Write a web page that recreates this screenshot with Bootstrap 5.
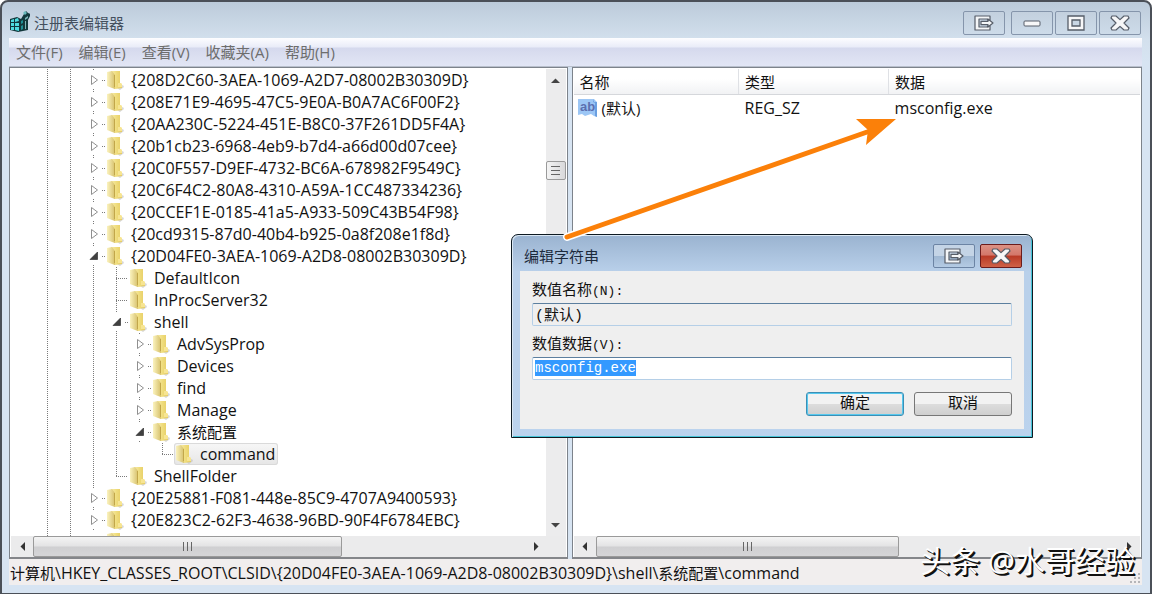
<!DOCTYPE html>
<html lang="zh-CN">
<head>
<meta charset="utf-8">
<meta name="viewport" content="width=device-width, initial-scale=1">
<title>注册表编辑器</title>
<link href="https://cdn.jsdelivr.net/npm/bootstrap@5.3.0/dist/css/bootstrap.min.css" rel="stylesheet">
<style>
html, body { height: 100%; }
body { font: 15px/22px "Open Sans", "Noto Sans CJK SC", sans-serif; color: #111; background: #fff; overflow: hidden; }
button { padding: 0; border: 0; background: none; color: inherit; }
svg { display: block; flex: none; }
.app-window { border: 2px solid #4b5058; border-bottom-width: 1px; border-radius: 8px 8px 0 0; background: linear-gradient(#bccbda 0, #d3e0ed 38px, #d7e4f2 60px); padding: 0 8px 8px 7px; }
.app-window > * { flex: none; }
.app-window > .panes { flex: 1 1 0; min-height: 0; }
.title-bar { height: 36px; padding-left: 1px; color: #44505e; }
.title-bar .caption { padding-top: 10px; }
.win-btns { display: flex; padding-top: 9px; line-height: 1; gap: 2px; }
.title-bar .win-btns { padding-right: 1px; }
.win-btn { width: 42px; height: 24px; border: 1px solid #8595ab; border-radius: 2px; display: flex; align-items: center; justify-content: center; background: linear-gradient(#c3d0de, #cddbe9); }
.menu-bar { height: 29px; padding: 0 0 2px 7px; background: linear-gradient(#fdfdff 0, #e9ecf8 9px, #d5d9ed 10px, #e2e6f5 28px, #b8bfcc 28px); }
.menu-bar button { color: #6d6d6d; margin-right: 16px; }
.pane { border: 1px solid #7d838b; border-bottom: 2px solid #84868a; background: #fff; min-width: 0; padding: 1px 1px 0; }
.tree-pane { flex: 0 0 49.3%; }
.value-pane { flex: 1 1 0; }
.tree { list-style: none; margin: 0; padding: 0 0 0 25px; overflow: hidden; font-size: 16px; }
.tree em, .status em { font-style: normal; font-size: 15px; }
.tree li { display: flex; height: 22px; white-space: nowrap; }
.tree i { width: 23px; flex: none; display: flex; justify-content: center; align-items: center; }
.tree .ln { background: repeating-linear-gradient(#7a7a7a 0 1px, transparent 1px 2px) 11px 0 / 1px 100% no-repeat; }
.tree .tee { background: repeating-linear-gradient(#7a7a7a 0 1px, transparent 1px 2px) 11px 0 / 1px 100% no-repeat, repeating-linear-gradient(90deg, #7a7a7a 0 1px, transparent 1px 2px) 11px 11px / 12px 1px no-repeat; }
.tree .elb { background: repeating-linear-gradient(#7a7a7a 0 1px, transparent 1px 2px) 11px 0 / 1px 12px no-repeat, repeating-linear-gradient(90deg, #7a7a7a 0 1px, transparent 1px 2px) 11px 11px / 12px 1px no-repeat; }
.tree .knob { background: linear-gradient(#7a7a7a, #7a7a7a) 11px 0 / 1px 1px no-repeat, linear-gradient(#7a7a7a, #7a7a7a) 11px 20px / 1px 1px no-repeat, repeating-linear-gradient(90deg, #7a7a7a 0 1px, transparent 1px 2px) 20px 11px / 3px 1px no-repeat; }
.tree span { display: flex; gap: 7px; padding: 0 3px 0 1px; line-height: 22px; }
.tree .picked { background: linear-gradient(#f7f7f7, #e6e6e6); box-shadow: inset 0 0 0 1px #dadada; border-radius: 3px; }
.bar-v { width: 20px; flex: none; background: #ececed; }
.bar-h { height: 21px; flex: none; background: #ebebec; }
.bar-h .arrow { width: 22px; }
.bar-v .arrow { height: 22px; }
.arrow, .grip { display: flex; align-items: center; justify-content: center; flex: none; }
.grip { border: 1px solid #9a9a9a; border-radius: 2px; background: linear-gradient(#f4f4f4, #e3e3e4 48%, #cfcfd1 52%, #d5d5d7); }
.bar-v .grip { height: 19px; background: linear-gradient(90deg, #f4f4f4, #d8d8da); }
.reg-list { width: 100%; table-layout: fixed; line-height: 24px; }
.reg-list th { font-weight: 400; height: 24px; padding: 1px 0 0 6px; background: linear-gradient(#fff 40%, #f1f2f4); border-right: 1px solid #dfe1e5; border-bottom: 1px solid #d5d7db; }
.reg-list th:last-child { border-right: 0; }
.reg-list td { padding: 0 0 0 6px; height: 26px; }
.reg-list .latin { font-size: 16px; }
.status { height: 26px; background: #f1eeee; white-space: nowrap; padding: 3px 0 0 1px; font-size: 16px; }
.edit-dialog { position: absolute; left: 511px; top: 234px; width: 522px; border: 1px solid #0e1a22; border-radius: 7px 7px 0 0; background: linear-gradient(#9ab3d0, #b9d0ea 37px, #b9d0ea 130px, #bbd3ee); box-shadow: inset 1px 1px #dbe8f4, inset -1px -1px #45c4d8; padding: 0 8px 8px; }
.edit-dialog .head { height: 36px; color: #1c2a3c; padding: 0 2px 0 4px; }
.edit-dialog .win-btns { gap: 5px; }
.edit-dialog .win-btn { background: linear-gradient(#c4d4e6 50%, #9fb7d2 50%, #b4cbe4); border-color: #6c84a4; }
.edit-dialog .win-btn.quit { background: linear-gradient(#dc9184 0, #d4776a 46%, #b93a26 50%, #cf6147); border-color: #6b1c1c; }
.edit-body { background: #efefef; padding: 10px 12px 13px; font-family: "Liberation Mono", "Noto Sans CJK SC", monospace; }
.edit-body label { font-size: 13px; display: block; }
.edit-body label b { font-size: 15px; font-weight: 400; }
.edit-body input { display: block; width: 100%; height: 23px; margin-bottom: 9px; padding: 0 2px 1px; border: 1px solid #b5cfe7; border-top-color: #5c7f9f; border-radius: 2px; outline: 0; font-size: 14px; line-height: 16px; color: #111; }
.edit-body input[readonly] { background: #efefef; font-size: 15px; }
.edit-body input::selection { background: #3399ff; color: #fff; }
.answers { display: flex; justify-content: flex-end; gap: 10px; padding-top: 3px; }
.push { width: 98px; height: 24px; border: 1px solid #777; border-radius: 3px; background: linear-gradient(#f2f2f2 48%, #dcdcdc 52%, #cfcfcf); padding-top: 1px; line-height: 20px; }
.push.main { border-color: #3c8fb5; box-shadow: inset 0 0 0 1px #56c8ee; }
.pointer { position: absolute; left: 560px; top: 110px; pointer-events: none; }
.watermark { position: absolute; right: 17px; bottom: 13px; font-size: 30px; line-height: 40px; color: #fff; text-shadow: 1px 1px #111, 2px 2px #111; white-space: nowrap; }
</style>
</head>
<body>
<svg width="0" height="0" class="position-absolute">
<defs>
<linearGradient id="gold" x2="1"><stop offset="0" stop-color="#f8edaa"/><stop offset=".5" stop-color="#efdc7c"/><stop offset="1" stop-color="#e6cc62"/></linearGradient>
<linearGradient id="pale" x2="1"><stop offset="0" stop-color="#fbf3bf"/><stop offset="1" stop-color="#d6c06a"/></linearGradient>
<symbol id="folder" viewBox="0 0 18 22"><path d="M11 19l6-3 1 2-4 3z" fill="#bdbdbd" opacity=".6"/><path d="M5 2h9v13l2 1v3l-7 1-3-2z" fill="url(#gold)"/><path d="M1 3l5-1 3 4v14l-3-1-5-2z" fill="url(#pale)"/><path d="M8.500 6v12" stroke="#c2a74a" fill="none"/><path d="M12 14h3l1 1v3h-4z" fill="#f7e593"/></symbol>
<symbol id="closed" viewBox="0 0 9 12"><path d="M2.500 1.500l6 4.500-6 4.500z" fill="#fff" stroke="#8f8f8f"/></symbol>
<symbol id="opened" viewBox="0 0 9 12"><path d="M8.500 2v7.500H1z" fill="#404040" stroke="#222" stroke-width=".6"/></symbol>
<symbol id="exit" viewBox="0 0 20 16"><path d="M1 1h15v4h-2.500V4H5v8h8.500v-1H16v4H1z" fill="#f4f6f8" stroke="#565d68" stroke-width="1.200" stroke-linejoin="round"/><path d="M7 6.300h7V4l5 4-5 4V9.700H7z" fill="#f4f6f8" stroke="#565d68" stroke-width="1.200" stroke-linejoin="round"/></symbol>
<symbol id="cross" viewBox="0 0 20 16"><path d="M2 1h4l4 3.600L14 1h4l1 2-5 5 5 5-1 2h-4l-4-3.600L6 15H2l-1-2 5-5-5-5z" fill="#f7f7f8" stroke="#565d68" stroke-width="1.200" stroke-linejoin="round"/></symbol>
</defs>
</svg>
<main class="app-window vh-100 d-flex flex-column">
<header class="title-bar d-flex">
<svg width="20" height="22" viewBox="0 0 20 22" class="mt-2"><path d="M0 9l7-2 4 2 3-5 2-3 2 2 3 1-2 4-1 2v10l-5 1-5 1-8-2z" fill="#12383c"/><path d="M1 10l3-1v3H1zM5 9l3-1 1 3-4 1zM1 13h3v3H1zm4 0h4v3H5zm-4 4h3v3H1zm4 0h4v4l-4-1z" fill="#4fdde0"/><path d="M11 11l2-1v3l-2 1zm0 5l2-1v4l-2 1z" fill="#1e8f96"/><path d="M13 3l2-2 2 2-2 2z" fill="#69b9bb"/><path d="M15 8l3-2v2l-3 2zM15 11h1v8h-1z" fill="#7db5b8"/></svg>
<div class="caption ms-1 flex-grow-1">注册表编辑器</div>
<div class="win-btns">
<button class="win-btn me-1" aria-label="切换窗口"><svg width="20" height="16"><use href="#exit"/></svg></button>
<button class="win-btn" aria-label="最小化"><svg width="18" height="8"><rect x="1" y="2" width="16" height="5" rx="1" fill="#f7f7f8" stroke="#565d68"/></svg></button>
<button class="win-btn" aria-label="最大化"><svg width="18" height="16"><path d="M1 1h16v14H1zM5 5v6h8V5z" fill="#f7f7f8" fill-rule="evenodd" stroke="#565d68" stroke-width="1.300"/></svg></button>
<button class="win-btn" aria-label="关闭"><svg width="20" height="16"><use href="#cross"/></svg></button>
</div>
</header>
<nav class="menu-bar d-flex">
<button>文件(F)</button><button>编辑(E)</button><button>查看(V)</button><button>收藏夹(A)</button><button>帮助(H)</button>
</nav>
<div class="panes d-flex gap-1">
<section class="pane tree-pane d-flex flex-column">
<div class="d-flex flex-fill overflow-hidden">
<ul class="tree flex-fill" id="tree"></ul>
<div class="bar-v d-flex flex-column">
<button class="arrow" aria-label="向上"><svg width="9" height="5"><path d="M0 5l4.500-4.500L9 5z" fill="#444"/></svg></button>
<div class="flex-grow-1 d-flex flex-column"><div style="height:16.500%"></div><div class="grip"><svg width="9" height="10"><path d="M0 1.500h9M0 5.500h9M0 9.500h9" stroke="#666"/></svg></div></div>
<button class="arrow" aria-label="向下"><svg width="9" height="5"><path d="M0 0l4.500 4.500L9 0z" fill="#444"/></svg></button>
</div>
</div>
<div class="bar-h d-flex">
<button class="arrow" aria-label="向左"><svg width="5" height="9"><path d="M5 0L.5 4.500 5 9z" fill="#333"/></svg></button>
<div class="flex-grow-1 d-flex"><div class="grip" style="width:62.500%"><svg width="11" height="9"><path d="M1.500 0v9M5.500 0v9M9.500 0v9" stroke="#666"/></svg></div></div>
<button class="arrow me-3 pe-1" aria-label="向右"><svg width="5" height="9"><path d="M0 0l4.500 4.500L0 9z" fill="#333"/></svg></button>
</div>
</section>
<section class="pane value-pane d-flex flex-column">
<div class="flex-fill">
<table class="reg-list">
<colgroup><col style="width:165px"><col style="width:150px"><col></colgroup>
<thead><tr><th>名称</th><th>类型</th><th>数据</th></tr></thead>
<tbody><tr><td class="p-0"><div class="d-flex align-items-center ps-1"><svg width="20" height="20" viewBox="0 0 20 20"><path d="M0 1h16l3 3v15l-3-1-3-2-3 1-3 1-3-2-4 1z" fill="#9cc6f5"/><path d="M16 1v3h3v15l-2-1V5l-2-1z" fill="#6a9fe0"/><text x="2" y="13" font-family="Liberation Sans" font-weight="700" font-size="13" fill="#5b6fb0">ab</text></svg><span class="ms-1">(默认)</span></div></td><td class="latin">REG_SZ</td><td class="latin">msconfig.exe</td></tr></tbody>
</table>
</div>
<div class="bar-h d-flex">
<button class="arrow" aria-label="向左"><svg width="5" height="9"><path d="M5 0L.5 4.500 5 9z" fill="#333"/></svg></button>
<div class="flex-grow-1 d-flex"><div class="grip" style="width:58%"><svg width="11" height="9"><path d="M1.500 0v9M5.500 0v9M9.500 0v9" stroke="#666"/></svg></div></div>
<button class="arrow" aria-label="向右"><svg width="5" height="9"><path d="M0 0l4.500 4.500L0 9z" fill="#333"/></svg></button>
</div>
</section>
</div>
<footer class="status d-flex">
<span class="flex-grow-1"><em>计算机</em>\HKEY_CLASSES_ROOT\CLSID\{20D04FE0-3AEA-1069-A2D8-08002B30309D}\shell\<em>系统配置</em>\command</span>
<svg width="12" height="12" class="align-self-end"><path d="M8 0h2v2H8zM4 4h2v2H4zm4 0h2v2H8zM0 8h2v2H0zm4 0h2v2H4zm4 0h2v2H8z" fill="#b5b5b8"/></svg>
</footer>
</main>
<div class="edit-dialog" role="dialog" aria-label="编辑字符串">
<div class="head d-flex">
<div class="flex-grow-1 pt-2 mt-1 lh-sm">编辑字符串</div>
<div class="win-btns"><button class="win-btn" aria-label="切换窗口"><svg width="20" height="16"><use href="#exit"/></svg></button><button class="win-btn quit" aria-label="关闭"><svg width="20" height="16"><use href="#cross"/></svg></button></div>
</div>
<form class="edit-body">
<label for="vname"><b>数值名称</b>(N):</label>
<input id="vname" value="(默认)" readonly>
<label for="vdata"><b>数值数据</b>(V):</label>
<input id="vdata" value="msconfig.exe">
<div class="answers"><button type="button" class="push main">确定</button><button type="button" class="push">取消</button></div>
</form>
</div>
<svg class="pointer" width="350" height="140"><path d="M7 127L310 21" stroke="#fff" stroke-width="8" stroke-linecap="round"/><path d="M7 127L310 21" stroke="#fb8009" stroke-width="5" stroke-linecap="round"/><path d="M296 9h40l-30 26 2-15z" fill="#fb8009"/></svg>
<div class="watermark">头条 @水哥经验</div>
<script src="https://cdn.jsdelivr.net/npm/bootstrap@5.3.0/dist/js/bootstrap.bundle.min.js"></script>
<script>
// Each entry: guide cells (l line, t tee, e elbow, c closed, o opened, _ blank) and the key name.
const keys = [
  ["llc", "{208D2C60-3AEA-1069-A2D7-08002B30309D}"],
  ["llc", "{208E71E9-4695-47C5-9E0A-B0A7AC6F00F2}"],
  ["llc", "{20AA230C-5224-451E-B8C0-37F261DD5F4A}"],
  ["llc", "{20b1cb23-6968-4eb9-b7d4-a66d00d07cee}"],
  ["llc", "{20C0F557-D9EF-4732-BC6A-678982F9549C}"],
  ["llc", "{20C6F4C2-80A8-4310-A59A-1CC487334236}"],
  ["llc", "{20CCEF1E-0185-41a5-A933-509C43B54F98}"],
  ["llc", "{20cd9315-87d0-40b4-b925-0a8f208e1f8d}"],
  ["llo", "{20D04FE0-3AEA-1069-A2D8-08002B30309D}"],
  ["lllt", "DefaultIcon"],
  ["lllt", "InProcServer32"],
  ["lllo", "shell"],
  ["llllc", "AdvSysProp"],
  ["llllc", "Devices"],
  ["llllc", "find"],
  ["llllc", "Manage"],
  ["llllo", "<em>系统配置</em>"],
  ["llll_e", "command"],
  ["llle", "ShellFolder"],
  ["llc", "{20E25881-F081-448e-85C9-4707A9400593}"],
  ["llc", "{20E823C2-62F3-4638-96BD-90F4F6784EBC}"],
  ["ll_", ""]
];
const cell = {
  l: '<i class="ln"></i>', t: '<i class="tee"></i>', e: '<i class="elb"></i>', _: '<i></i>',
  c: '<i class="knob"><svg width="9" height="12"><use href="#closed"/></svg></i>',
  o: '<i class="knob"><svg width="9" height="12"><use href="#opened"/></svg></i>'
};
document.getElementById("tree").innerHTML = keys.map(([guides, name]) =>
  `<li>${[...guides].map(g => cell[g]).join("")}<span class="${name === "command" ? "picked" : ""}"><svg width="18" height="22"><use href="#folder"/></svg>${name}</span></li>`).join("");
const data = document.getElementById("vdata");
data.focus();
data.select();
</script>
</body>
</html>
